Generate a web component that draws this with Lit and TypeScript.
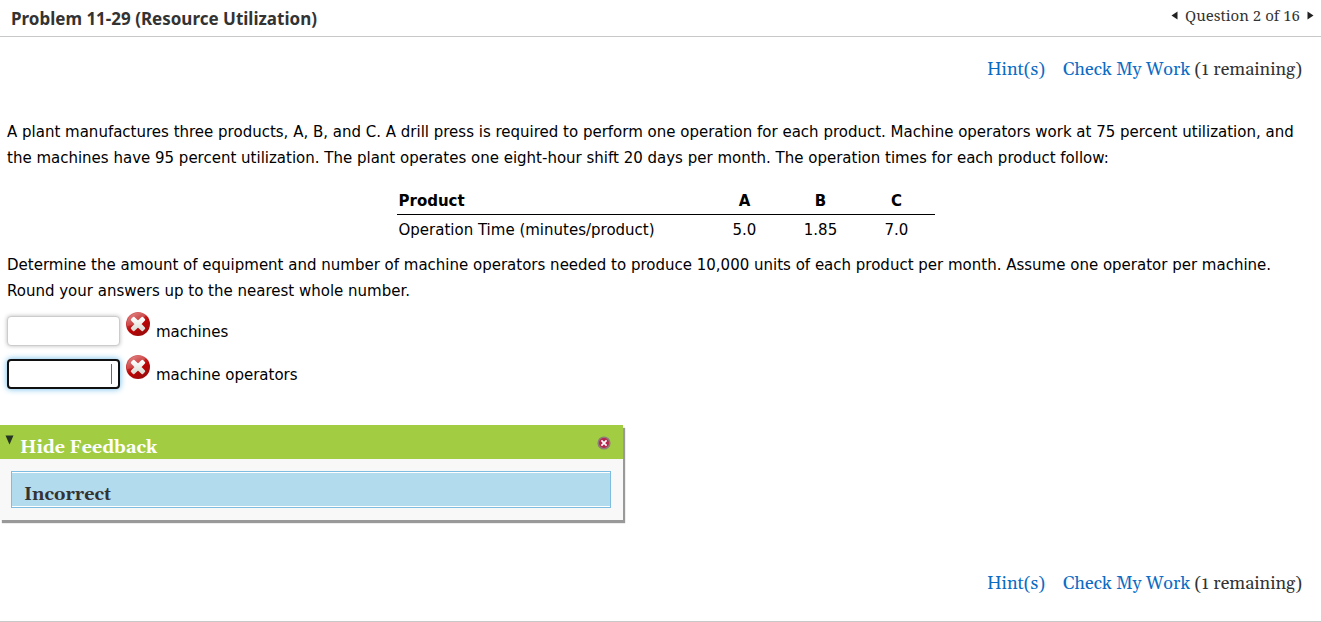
import { LitElement, html, css } from "lit";
import { customElement, property } from "lit/decorators.js";

@customElement("wrong-mark")
class WrongMark extends LitElement {
  static styles = css`
    :host { display: block; width: 24px; height: 24px; }
    .mark { display: block; width: 100%; height: 100%; }
  `;
  render() {
    return html`<svg class="mark" viewBox="0 0 24 24" role="img" aria-label="Incorrect">
      <defs>
        <linearGradient id="base" x1="0.1" y1="0" x2="0.7" y2="1">
          <stop offset="0" stop-color="#e08080" />
          <stop offset="0.35" stop-color="#c83434" />
          <stop offset="0.6" stop-color="#bc0404" />
          <stop offset="1" stop-color="#980c0c" />
        </linearGradient>
        <linearGradient id="cross" x1="0" y1="0" x2="0" y2="1">
          <stop offset="0" stop-color="#ffffff" />
          <stop offset="1" stop-color="#dcdcd4" />
        </linearGradient>
      </defs>
      <circle cx="12" cy="12" r="12" fill="url(#base)" />
      <path d="M1 14C7 14 15 10 20 3A12 12 0 0 0 1 14Z" fill="#fff" opacity="0.16" />
      <path d="M7.7 5.8 12 9.8l4.3-4 1.9 1.9L14.2 12l4 4.3-1.9 1.9L12 14.2l-4.3 4-1.9-1.9L9.8 12l-4-4.3Z"
        fill="url(#cross)" stroke="url(#cross)" stroke-width="2" stroke-linejoin="round" />
    </svg>`;
  }
}

@customElement("work-tools")
class WorkTools extends LitElement {
  @property({ type: Number }) remaining = 1;
  static styles = css`
    :host {
      display: flex;
      justify-content: flex-end;
      gap: 18px;
      padding: 0 19px;
      font-family: Gelasio, Georgia, "Liberation Serif", serif;
      font-size: 18px;
      line-height: 24px;
      color: #333;
    }
    .link { color: #0b6cc4; text-decoration: none; }
  `;
  render() {
    return html`<a class="link" href="#hints">Hint(s)</a>
      <span><a class="link" href="#check">Check My Work</a> (${this.remaining} remaining)</span>`;
  }
}

@customElement("app-root")
class AppRoot extends LitElement {
  private times = [
    { name: "A", minutes: "5.0" },
    { name: "B", minutes: "1.85" },
    { name: "C", minutes: "7.0" },
  ];
  private answers = [
    { id: "machines", label: "machines", active: false },
    { id: "operators", label: "machine operators", active: true },
  ];

  static styles = css`
    :host {
      display: block;
      background: #fff;
      color: #000;
      font-family: "DejaVu Sans", Verdana, sans-serif;
      font-size: 15px;
      line-height: 26px;
      border-bottom: 1px solid #c8c8c8;
      padding-bottom: 25px;
    }
    .header {
      display: flex;
      justify-content: space-between;
      align-items: flex-start;
      height: 36px;
      padding: 0 7px 0 11px;
      border-bottom: 1px solid #c8c8c8;
      color: #333;
    }
    .title {
      margin: 0;
      font: 700 17px/37px "Noto Sans", "Open Sans", sans-serif;
    }
    .pager {
      display: flex;
      align-items: center;
      gap: 7px;
      font: 15px/31px "Noto Serif", "Droid Serif", "Liberation Serif", serif;
    }
    .step {
      display: flex;
      margin: 0;
      padding: 0;
      border: 0;
      background: none;
    }
    .arrow { display: block; width: 7px; height: 9px; fill: #222; }
    .top-tools { margin-top: 21px; }
    .problem { padding: 37px 7px 0; }
    .text { margin: 0; }
    .data { padding: 17px 0 7px 10px; }
    .times {
      width: 538px;
      margin: 0 auto;
      border-collapse: collapse;
      table-layout: fixed;
    }
    .times th, .times td { padding: 0; text-align: center; }
    .times thead th { height: 26px; border-bottom: 1px solid #000; }
    .times tbody th, .times tbody td { height: 30px; font-weight: 400; }
    .times .name { width: 308px; padding-left: 2px; text-align: left; }
    .answers {
      display: grid;
      gap: 13px;
      margin-top: 12px;
    }
    .answer {
      display: flex;
      align-items: flex-start;
      gap: 6px;
      height: 30px;
    }
    .field {
      box-sizing: border-box;
      width: 113px;
      height: 30px;
      padding: 4px 8px;
      border: 1px solid #ccc;
      border-radius: 4px;
      outline: none;
      background: #fff;
      box-shadow: 0 0 4px #bbb;
      font: inherit;
      text-align: right;
    }
    .field.active {
      border: 2px solid #101010;
      box-shadow: 0 0 6px #66b8e8;
      background: linear-gradient(#1a82b8, #1a82b8) right 6px center / 1px 20px no-repeat #fff;
    }
    .mark { margin-top: -4px; }
    .label { padding-top: 3px; }
    .feedback {
      width: 623px;
      max-width: 100%;
      margin: 36px 0 52px;
      background: #f8f8f8;
      box-shadow: 2px 3px 1px #999;
      font: 700 18px/26px Gelasio, Georgia, "Liberation Serif", serif;
    }
    .bar {
      display: flex;
      justify-content: space-between;
      align-items: flex-start;
      height: 34px;
      padding: 0 12px 0 5px;
      background: #a2cd43;
    }
    .toggle {
      display: flex;
      align-items: flex-start;
      gap: 6px;
      margin: 0;
      padding: 10px 0 0;
      border: 0;
      background: none;
      color: #fff;
      font: inherit;
    }
    .caret { display: block; width: 9px; height: 10px; fill: #263422; }
    .close {
      margin: 11px 0 0;
      padding: 0;
      border: 0;
      background: none;
    }
    .cross { display: block; width: 14px; height: 14px; }
    .body { padding: 12px 12px 12px 11px; }
    .result {
      margin: 0;
      padding: 10px 12px 0;
      height: 25px;
      border: 1px solid #7fbde0;
      box-shadow: inset 0 1px #fff, inset 0 -1px #fff;
      background: #b3dbee;
      color: #333;
      font: inherit;
    }
  `;

  render() {
    return html`
      <header class="header">
        <h1 class="title">Problem 11-29 (Resource Utilization)</h1>
        <nav class="pager">
          <button class="step" aria-label="Previous question">
            <svg class="arrow" viewBox="0 0 7 9"><path d="M6.5 0.5v8L0.5 4.5Z" /></svg>
          </button>
          <span>Question 2 of 16</span>
          <button class="step" aria-label="Next question">
            <svg class="arrow" viewBox="0 0 7 9"><path d="M0.5 0.5v8L6.5 4.5Z" /></svg>
          </button>
        </nav>
      </header>
      <work-tools class="top-tools"></work-tools>
      <main>
        <section class="problem">
          <p class="text">A plant manufactures three products, A, B, and C. A drill press is required to perform one operation for each product. Machine operators work at 75 percent utilization, and the machines have 95 percent utilization. The plant operates one eight-hour shift 20 days per month. The operation times for each product follow:</p>
          <div class="data">
            <table class="times">
              <thead>
                <tr>
                  <th class="name" scope="col">Product</th>
                  ${this.times.map((t) => html`<th scope="col">${t.name}</th>`)}
                </tr>
              </thead>
              <tbody>
                <tr>
                  <th class="name" scope="row">Operation Time (minutes/product)</th>
                  ${this.times.map((t) => html`<td>${t.minutes}</td>`)}
                </tr>
              </tbody>
            </table>
          </div>
          <p class="text">Determine the amount of equipment and number of machine operators needed to produce 10,000 units of each product per month. Assume one operator per machine. Round your answers up to the nearest whole number.</p>
          <div class="answers">
            ${this.answers.map((a) => html`
              <div class="answer">
                <input class="field ${a.active ? "active" : ""}" id=${a.id} type="text" />
                <wrong-mark class="mark"></wrong-mark>
                <label class="label" for=${a.id}>${a.label}</label>
              </div>`)}
          </div>
        </section>
        <section class="feedback">
          <div class="bar">
            <button class="toggle">
              <svg class="caret" viewBox="0 0 9 10"><path d="M0.5 0.5h8L4.5 9.5Z" /></svg>
              <span>Hide Feedback</span>
            </button>
            <button class="close" aria-label="Close feedback">
              <svg class="cross" viewBox="0 0 14 14">
                <circle cx="7" cy="7" r="5.8" fill="#b8254c" stroke="#8d7d78" stroke-width="1.6" />
                <path d="M4.4 4.4l5.2 5.2M9.6 4.4l-5.2 5.2" stroke="#fff" stroke-width="1.7" />
              </svg>
            </button>
          </div>
          <div class="body"><h2 class="result">Incorrect</h2></div>
        </section>
      </main>
      <work-tools></work-tools>
    `;
  }
}
